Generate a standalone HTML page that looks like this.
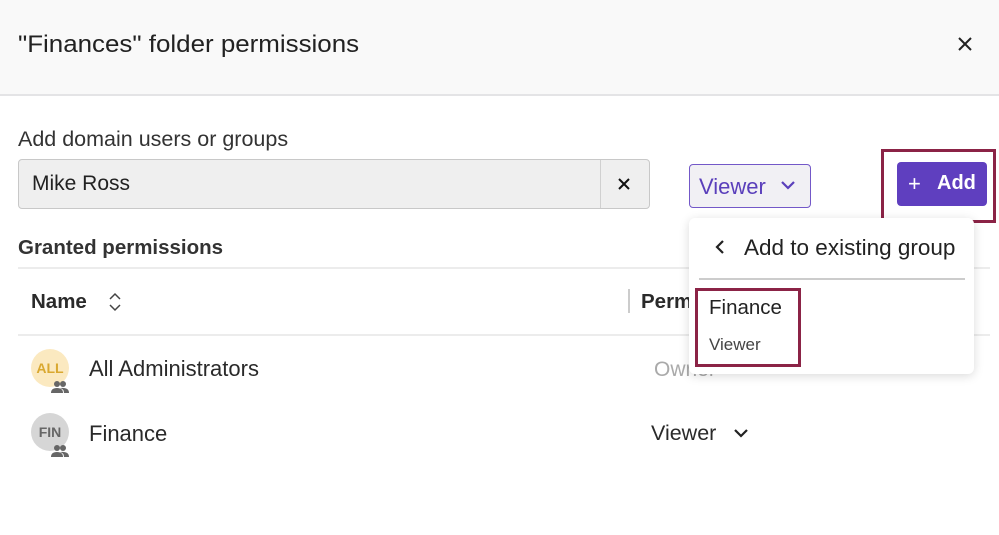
<!DOCTYPE html>
<html><head><style>
*{margin:0;padding:0;box-sizing:border-box}
body{width:999px;height:535px;background:#fff;font-family:"Liberation Sans",sans-serif;color:#2a2a2a;position:relative;overflow:hidden}
.a{position:absolute;white-space:nowrap}
</style></head><body>
<div class="a" style="left:0;top:0;width:999px;height:96px;background:#f9f9f9;border-bottom:2px solid #e4e4e6"></div>
<div class="a" style="left:18px;top:31px;font-size:24px;color:#222;transform:scaleX(1.08);transform-origin:left">"Finances" folder permissions</div>
<svg class="a" style="left:957px;top:36px" width="16" height="16"><path d="M2 2L14 14M14 2L2 14" stroke="#222" stroke-width="2"/></svg>
<div class="a" style="left:18px;top:127px;font-size:21.5px;color:#333">Add domain users or groups</div>
<div class="a" style="left:18px;top:159px;width:632px;height:50px;background:#efefef;border:1.5px solid #c8c8c8;border-radius:4px"></div>
<div class="a" style="left:600px;top:160px;width:1px;height:48px;background:#d0d0d0"></div>
<div class="a" style="left:32px;top:172px;font-size:21px;color:#222">Mike Ross</div>
<svg class="a" style="left:618px;top:178px" width="12" height="12"><path d="M1 1L11 11M11 1L1 11" stroke="#111" stroke-width="2"/></svg>
<div class="a" style="left:689px;top:164px;width:122px;height:44px;background:#f1f0f4;border:1.5px solid #7358c8;border-radius:4px"></div>
<div class="a" style="left:699px;top:174px;font-size:22px;color:#5a3fbb">Viewer</div>
<svg class="a" style="left:780px;top:180px" width="16" height="10"><path d="M2 2L8 8L14 2" stroke="#5a3fbb" stroke-width="2.2" fill="none"/></svg>
<div class="a" style="left:881px;top:149px;width:115px;height:74px;border:3px solid #8b2346"></div>
<div class="a" style="left:897px;top:162px;width:90px;height:44px;background:#5f3fbf;border-radius:4px"></div>
<div class="a" style="left:908px;top:171px;font-size:22px;color:#fff">+</div>
<div class="a" style="left:937px;top:172px;font-size:20px;color:#fff;font-weight:bold">Add</div>
<div class="a" style="left:18px;top:236px;font-size:20.5px;font-weight:bold;color:#333">Granted permissions</div>
<div class="a" style="left:18px;top:267px;width:972px;height:2px;background:#ececec"></div>
<div class="a" style="left:31px;top:290px;font-size:20.5px;font-weight:bold;color:#2a2a2a">Name</div>
<svg class="a" style="left:108px;top:292px" width="14" height="20"><path d="M2 7L7 2L12 7M2 13L7 18L12 13" stroke="#444" stroke-width="1.5" fill="none"/></svg>
<div class="a" style="left:628px;top:289px;width:2px;height:24px;background:#ccc"></div>
<div class="a" style="left:641px;top:290px;font-size:20.5px;font-weight:bold;color:#2a2a2a">Perm</div>
<div class="a" style="left:18px;top:334px;width:972px;height:2px;background:#ececec"></div>
<div class="a" style="left:31px;top:349px;width:38px;height:38px;border-radius:50%;background:#fbe9c0;color:#d9a830;font-size:14px;font-weight:bold;text-align:center;line-height:38px">ALL</div>
<svg class="a" style="left:51px;top:380px" width="18" height="14"><circle cx="6" cy="4" r="3" fill="#666"/><circle cx="12" cy="4" r="3" fill="#666"/><path d="M0 13Q0 8 6 8Q12 8 12 13ZM9 8Q18 7 18 13H13Q13 9 9 8Z" fill="#666"/></svg>
<div class="a" style="left:89px;top:356px;font-size:22px">All Administrators</div>
<div class="a" style="left:654px;top:358px;font-size:21px;color:#aaa">Owner</div>
<div class="a" style="left:31px;top:413px;width:38px;height:38px;border-radius:50%;background:#d6d6d6;color:#666;font-size:14px;font-weight:bold;text-align:center;line-height:38px">FIN</div>
<svg class="a" style="left:51px;top:444px" width="18" height="14"><circle cx="6" cy="4" r="3" fill="#666"/><circle cx="12" cy="4" r="3" fill="#666"/><path d="M0 13Q0 8 6 8Q12 8 12 13ZM9 8Q18 7 18 13H13Q13 9 9 8Z" fill="#666"/></svg>
<div class="a" style="left:89px;top:421px;font-size:22px">Finance</div>
<div class="a" style="left:651px;top:421px;font-size:21.5px">Viewer</div>
<svg class="a" style="left:733px;top:428px" width="16" height="10"><path d="M2 2L8 8L14 2" stroke="#222" stroke-width="2.2" fill="none"/></svg>
<div class="a" style="left:689px;top:218px;width:285px;height:156px;background:#fff;border-radius:6px;box-shadow:0 2px 10px rgba(0,0,0,.15)"></div>
<svg class="a" style="left:715px;top:239px" width="10" height="16"><path d="M8 2L2 8L8 14" stroke="#222" stroke-width="2.2" fill="none"/></svg>
<div class="a" style="left:744px;top:235px;font-size:22.5px;color:#222">Add to existing group</div>
<div class="a" style="left:699px;top:278px;width:266px;height:2px;background:#ccc"></div>
<div class="a" style="left:709px;top:296px;font-size:20.5px;color:#222">Finance</div>
<div class="a" style="left:709px;top:335px;font-size:17px;color:#444">Viewer</div>
<div class="a" style="left:695px;top:288px;width:106px;height:79px;border:3px solid #8b2346"></div>
</body></html>
